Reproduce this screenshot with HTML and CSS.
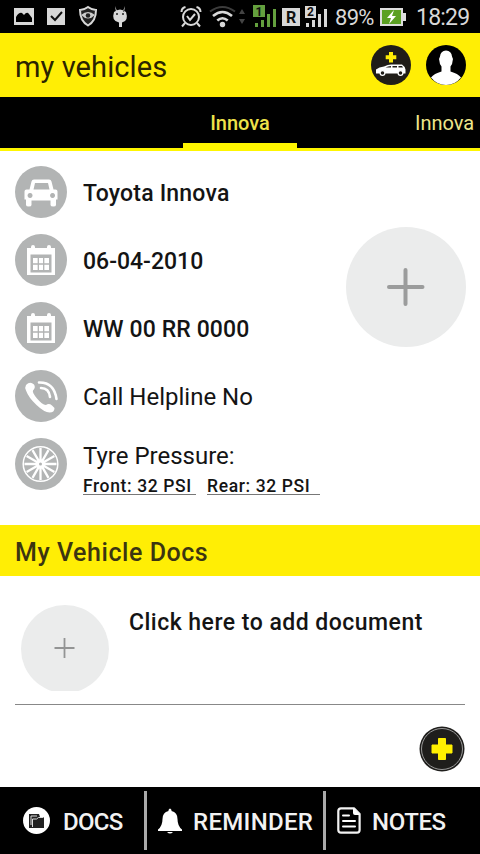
FILE: index.html
```html
<!DOCTYPE html>
<html lang="en">
<head>
<meta charset="utf-8">
<title>my vehicles</title>
<link rel="stylesheet" href="styles.css">
</head>
<body>
<svg class="defs" width="0" height="0" aria-hidden="true">
  <symbol id="calendar" viewBox="0 0 52 52">
    <path fill="#fff" d="M12 14h4v-1q0-2 2-2t2 2v1h12v-1q0-2 2-2t2 2v1h4v27H12z"/>
    <path fill="#b2b4b4" d="M15.500 20.500h21v18h-21z"/>
    <path fill="#fff" d="M18 24h16v12H18z"/>
    <path stroke="#b2b4b4" stroke-width="1.300" d="M17 30h18M23.300 24v12M28.700 24v12"/>
  </symbol>
</svg>
<div class="phone">
  <div class="status">
    <svg class="status-icons" width="330" height="33" viewBox="0 0 330 33">
      <g fill="#d8d8d8">
        <path d="M14 8h20v17H14z"/><path d="M16 22v-5q3-5 6-4l2 2q3-4 5-1l3 4v4z" fill="#000"/>
        <path d="M47 8h18v17H47z"/>
        <path d="M114 12q6-5 12 0 3 9-4 10.500V27h-3v-4.500q-8-1.500-5-10.500zM115 6l2 5-1 1zM125 6l-2 5 1 1z"/>
        <circle cx="222.500" cy="24.500" r="2.700"/>
        <path d="M282 8h18v18h-18z"/>
        <path d="M305 6h11v12h-11zM306 23h3v4h-3zM312 20h3v7h-3zM318 14h3v13h-3zM324 9h3v18h-3z"/>
      </g>
      <path d="M51 16l4 4 7-8" fill="none" stroke="#111" stroke-width="2"/>
      <path d="M88 7q-4 3-8 3 0 11 8 15.500Q96 21 96 10q-4 0-8-3z" fill="#222" stroke="#d8d8d8" stroke-width="2"/>
      <path d="M81 15q7-6 14 0-7 7-14 0z" fill="#ccc"/><circle cx="88" cy="15.500" r="2.300" fill="#222"/>
      <circle cx="117" cy="14" r="1" fill="#222"/><circle cx="123" cy="14" r="1" fill="#222"/>
      <g fill="none" stroke="#d8d8d8" stroke-width="2">
        <circle cx="191" cy="17" r="8"/><path d="M187 16l3 4 5-6M181.500 12q0-4 4-5M200.500 12q0-4-4-5M185 23l-3 3.500M197 23l3 3.500"/>
        <path stroke-width="2.600" d="M213 16q9.500-8 19 0M217.300 20.500q5.200-4.500 10.400 0"/>
        <path stroke="#3c3c3c" d="M210 11.500q12.500-9 25 0"/>
      </g>
      <path fill="#444" d="M242 9l3 5h-6zM242 24l3-5h-6z"/>
      <path fill="#64a03e" d="M253 5h12v12h-12zM255 23h3v4h-3zM261 20h3v7h-3zM267 14h3v13h-3zM273 9h3v18h-3z"/>
      <text x="259" y="15.500" class="sim">1</text><text x="310.500" y="16" class="sim">2</text><text x="291" y="23" class="roam">R</text>
    </svg>
    <span class="percent">89%</span>
    <svg class="battery" width="26" height="18" viewBox="0 0 26 18"><path fill="#ddd" d="M0 0h23v5h3v8h-3v5H0z"/><path fill="#5ba022" d="M2 2h19v14H2z"/><path fill="#fff" d="M14 2l-7 8h4l-2 6 7-8h-4z"/></svg>
    <span class="clock">18:29</span>
  </div>
  <header class="header">
    <h1 class="title">my vehicles</h1>
    <svg class="add-car" width="40" height="40" viewBox="0 0 40 40"><circle cx="20" cy="20" r="20" fill="#201d18"/><path fill="#ffee05" d="M18 7h4v3.300h3.300v4H22v3.200h-4v-3.200h-3.300v-4H18z"/><path fill="#fff" d="M5 28.500v-4q3-2.500 8-3 4-2 7-2h11q2.500 1.500 3.500 5v4z"/><path fill="#201d18" d="M14.500 22.500q2.500-1.500 5.500-1.500v1.500zM21.500 21h4.500v1.500h-4.500zM27.500 21h3.500l1 1.500h-4.500z"/><g fill="#201d18" stroke="#fff" stroke-width="1.200"><circle cx="11.500" cy="28" r="2.400"/><circle cx="29.500" cy="28" r="2.400"/></g></svg>
    <svg width="40" height="40" viewBox="0 0 40 40"><circle cx="20" cy="20" r="20"/><path fill="#fff" d="M15.500 26.500v-5q-2-2-2-5-1-3 0.500-5Q14.500 6 20 5.500q5.500 0.500 6 6 1.500 2 0.500 5 0 3-2 5v5q7.500 2 10.500 6Q29 40 20 40T5 32.500q3-4 10.500-6z"/></svg>
  </header>
  <nav class="tabs">
    <span class="tab tab-active">Innova</span>
    <span class="tab tab-next">Innova</span>
  </nav>
  <main class="details">
    <div class="rows">
      <div class="row">
        <svg class="disc" viewBox="0 0 52 52"><path fill="#fff" fill-rule="evenodd" d="M16.500 15.500q0.500-2 2.500-2h15q2 0 2.500 2l2 8h2q2 0 2 2v8H41V39q0 1.500-2.700 1.500T35.500 39v-4.500h-19V39q0 1.500-2.700 1.500T11 39v-5.500H9.500v-8q0-2 2-2h3zM20 17l-1.500 6.500h16L33 17zM15 27a2.500 2.500 0 1 0 .1 0zM37.500 27a2.500 2.500 0 1 0 .1 0z"/></svg>
        <span class="din name">Toyota Innova</span>
      </div>
      <div class="row"><svg class="disc" viewBox="0 0 52 52"><use href="#calendar"/></svg><span class="din date">06-04-2010</span></div>
      <div class="row"><svg class="disc" viewBox="0 0 52 52"><use href="#calendar"/></svg><span class="din plate">WW 00 RR 0000</span></div>
      <div class="row">
        <svg class="disc" viewBox="0 0 52 52"><path fill="#fff" d="M11 15q4-4 8-0.500 2 3-1 6-1 2 4 8t9 6.500q3-2 6 0.500l2.500 2.500q0 4.500-5 4.500-5 0-13-7.500T11 20.500q-1.500-3 0-5.500z"/><path fill="none" stroke="#fff" stroke-width="2.600" stroke-linecap="round" d="M24 12.500Q39 12 41.500 29M26 18q8 0 9 9"/></svg>
        <span class="plain helpline">Call Helpline No</span>
      </div>
      <div class="row">
        <svg class="disc" viewBox="0 0 52 52"><g fill="none" stroke="#fff"><circle cx="25.500" cy="26" r="17.300" stroke-width="1.500"/><path stroke-width="2.300" d="M25.500 10v32M9.500 26h32M11.600 18l27.800 16M11.600 34l27.800-16M17.500 12.100l16 27.800M33.500 12.100l-16 27.800"/></g><circle cx="25.500" cy="26" r="4.500" fill="#fff"/><circle cx="25.500" cy="26" r="1.500" fill="#b2b4b4"/></svg>
        <div class="tyre">
          <div class="plain tyre-title">Tyre Pressure:</div>
          <div class="pressures"><span class="pressure">Front: 32 PSI</span><span class="pressure rear">Rear: 32 PSI</span></div>
        </div>
      </div>
    </div>
    <svg class="photo" width="120" height="120" viewBox="0 0 120 120"><circle cx="60" cy="60" r="60" fill="#ebecec"/><path fill="none" stroke="#9b9c9c" stroke-width="4" stroke-linecap="round" d="M43 60h33.500M59.500 43v34"/></svg>
  </main>
  <h2 class="section">My Vehicle Docs</h2>
  <section class="docs">
    <div class="doc">
      <svg width="88" height="86" viewBox="0 0 88 86"><circle cx="44" cy="44" r="44" fill="#ebecec"/><path stroke="#939494" stroke-width="1.800" d="M33.500 43h20M43.500 33v20"/></svg>
      <span class="din doc-text">Click here to add document</span>
    </div>
    <div class="fab-line">
      <svg width="46" height="46" viewBox="0 0 46 46"><circle cx="23" cy="23" r="22.500" fill="#1f1e1c"/><circle cx="23" cy="23" r="20.500" fill="none" stroke="#999" stroke-width="1"/><path fill="#fff000" stroke="#fff000" stroke-width="1" stroke-linejoin="round" d="M19.500 12.500h7V19H33v8h-6.500v6.500h-7V27H13v-8h6.500z"/></svg>
    </div>
  </section>
  <footer class="bottom">
    <div class="item item-docs">
      <svg width="27" height="27" viewBox="0 0 27 27"><circle cx="13.500" cy="13.500" r="13.500" fill="#fff"/><path fill="#222" d="M6 7h10l1 3h4v11H6z"/><path fill="none" stroke="#ddd" stroke-width="1" d="M8 18V9h6M9.500 20v-8h4l2-1.500h5"/></svg>
      <span class="label-docs">DOCS</span>
    </div>
    <i class="divider"></i>
    <div class="item item-reminder">
      <svg width="24" height="26" viewBox="0 0 24 26"><path fill="#fff" d="M10.500 2q1.500-3 3 0v1q6 1.500 6 8 0 7 4.500 10.500V23H0v-1.500Q4.500 18 4.500 11q0-6.500 6-8zM9 24h6q-3 3-6 0z"/></svg>
      <span class="label-reminder">REMINDER</span>
    </div>
    <i class="divider"></i>
    <div class="item item-notes">
      <svg width="24" height="27" viewBox="0 0 24 27"><path fill="none" stroke="#f2f2f2" stroke-width="2.200" stroke-linejoin="round" d="M4 1.300h13l5.600 5.700v16q0 2.600-2.600 2.600H4q-2.700 0-2.700-2.600V4Q1.300 1.300 4 1.300z"/><path fill="#fff" d="M16 1l7 7h-5q-2 0-2-2z"/><path stroke="#fff" stroke-width="2" stroke-linecap="round" d="M6 8.500h6M6 14h12M6 19.500h12"/></svg>
      <span class="label-notes">NOTES</span>
    </div>
  </footer>
</div>
</body>
</html>
```
FILE: styles.css
```css
* { box-sizing: border-box; }
body { margin: 0; background: #fff; font-family: Roboto, sans-serif; color: #141414; }
svg { display: block; flex: none; }
h1, h2 { margin: 0; font-weight: 400; }
.defs { position: absolute; }
.phone { width: 480px; height: 854px; display: flex; flex-direction: column; overflow: hidden; }
.status { height: 33px; background: #000; display: flex; align-items: center; color: #d8d8d8; font-size: 23px; white-space: nowrap; }
.sim { font: 700 12px Roboto, sans-serif; text-anchor: middle; fill: #111; }
.roam { font: 700 16px Roboto, sans-serif; text-anchor: middle; fill: #111; }
.percent { width: 50px; padding: 2px 0 0 5px; font-size: 22px; letter-spacing: -.7px; }
.clock { margin-left: 10px; padding-top: 2px; letter-spacing: -.8px; }
.header { height: 64px; background: #ffee05; display: flex; align-items: center; padding: 0 14px 0 15px; }
.title { flex: 1; font-size: 29px; color: #2b2400; letter-spacing: .1px; line-height: 40px; padding-top: 3px; }
.add-car { margin-right: 15px; }
.tabs { height: 54px; background: #000; border-bottom: 3px solid #fff600; display: flex; padding-left: 183px; color: #eee58b; font-size: 20px; line-height: 53px; white-space: nowrap; }
.tab-active { width: 114px; height: 51px; text-align: center; font-weight: 500; color: #eee24a; border-bottom: 5px solid #fff600; }
.tab-next { margin-left: 118px; }
.details { height: 374px; display: flex; padding: 15px 14px 0 15px; }
.rows { flex: 1; display: flex; flex-direction: column; gap: 16px; white-space: nowrap; }
.row { height: 52px; display: flex; align-items: center; gap: 16px; }
.disc { width: 52px; height: 52px; border-radius: 50%; background: #b2b4b4; }
.din { font-size: 23px; font-weight: 500; line-height: 28px; padding-top: 3px; }
.name { letter-spacing: .2px; }
.plate { letter-spacing: .1px; }
.doc-text { letter-spacing: .48px; padding-top: 4px; }
.plain { font-size: 24px; line-height: 28px; }
.helpline { padding-top: 2px; }
.tyre { height: 58px; margin-top: 6px; display: flex; flex-direction: column; }
.tyre-title { margin-top: 4px; line-height: 28px; }
.pressures { display: flex; gap: 11px; margin-top: 4px; }
.pressure { width: 113px; height: 21px; flex: none; border-bottom: 1px solid #777; font-size: 17.500px; font-weight: 500; line-height: 24px; letter-spacing: .62px; }
.photo { margin-top: 61px; }
.section { height: 51px; background: #ffee05; padding: 2px 15px 0; color: #3c3511; font-size: 25px; font-weight: 500; line-height: 51px; letter-spacing: .55px; }
.docs { height: 211px; padding: 0 15px; }
.doc { height: 129px; display: flex; padding: 29px 0 0 6px; gap: 20px; border-bottom: 1px solid #888; white-space: nowrap; }
.fab-line { display: flex; justify-content: flex-end; padding-top: 21px; }
.bottom { height: 67px; background: #000; color: #f2f2f2; display: flex; align-items: center; font-size: 24px; font-weight: 500; }
.item { display: flex; align-items: center; height: 100%; }
.item span { padding-top: 3px; }
.label-docs { letter-spacing: -.7px; }
.label-reminder { letter-spacing: .3px; }
.label-notes { letter-spacing: -.4px; }
.item-docs { width: 144px; padding-left: 23px; gap: 13px; }
.item-reminder { width: 176px; padding-left: 11px; gap: 11px; }
.item-notes { padding-left: 11px; gap: 11px; }
.divider { width: 3px; height: 59px; background: #aaa; flex: none; }
```
